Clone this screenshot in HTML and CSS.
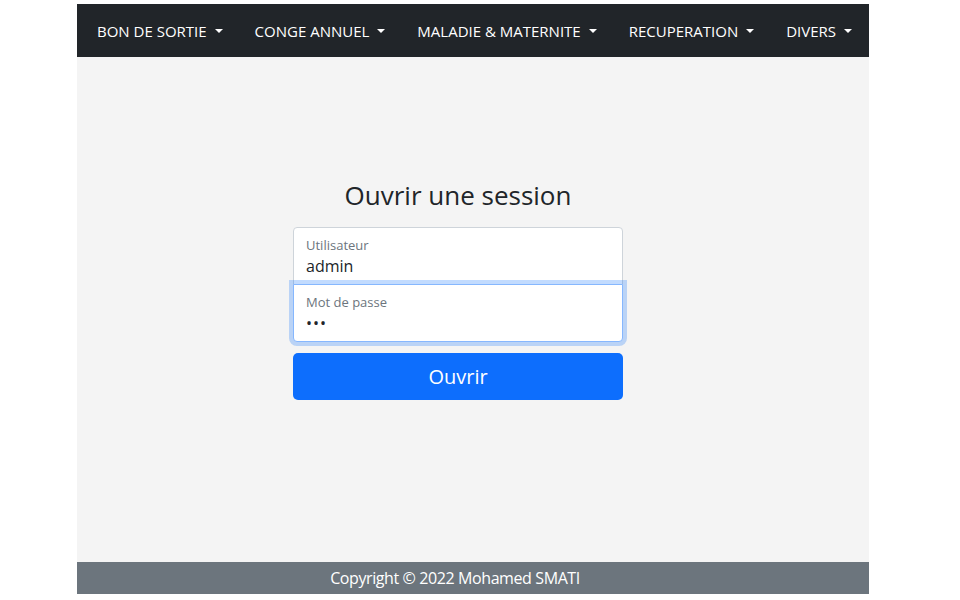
FILE: index.html
```html
<!DOCTYPE html>
<html lang="fr">
<head>
<meta charset="utf-8">
<title>Ouvrir une session</title>
<link rel="stylesheet" href="styles.css">
</head>
<body>
<div class="page">
  <nav class="navbar">
    <ul class="nav">
      <li class="nav-item"><a class="nav-link" href="#">BON DE SORTIE<span class="caret"></span></a></li>
      <li class="nav-item"><a class="nav-link" href="#">CONGE ANNUEL<span class="caret"></span></a></li>
      <li class="nav-item"><a class="nav-link" href="#">MALADIE &amp; MATERNITE<span class="caret"></span></a></li>
      <li class="nav-item"><a class="nav-link" href="#">RECUPERATION<span class="caret"></span></a></li>
      <li class="nav-item"><a class="nav-link" href="#">DIVERS<span class="caret"></span></a></li>
    </ul>
  </nav>
  <main class="main">
    <form class="login">
      <h1 class="title">Ouvrir une session</h1>
      <div class="floating first">
        <input class="control" type="text" value="admin" id="user">
        <label class="float-label" for="user">Utilisateur</label>
      </div>
      <div class="floating second focused">
        <input class="control" type="password" value="abc" id="pass">
        <label class="float-label" for="pass">Mot de passe</label>
      </div>
      <button class="btn" type="button">Ouvrir</button>
    </form>
  </main>
  <footer class="footer">
    <span class="copy">Copyright © 2022 Mohamed SMATI</span>
  </footer>
</div>
</body>
</html>
```

FILE: styles.css
```css
* { box-sizing: border-box; }
html, body { margin: 0; padding: 0; background: #ffffff; }
body {
  font-family: "Open Sans", "Noto Sans", sans-serif;
  color: #212529;
}
.page {
  width: 792px;
  margin: 4px 0 0 77px;
}
.navbar {
  background: #212529;
  height: 53px;
  display: flex;
  align-items: center;
  padding-left: 4px;
}
.nav {
  list-style: none;
  margin: 0;
  padding: 0;
  display: flex;
}
.nav-link {
  display: flex;
  align-items: center;
  padding: 0 16px;
  color: #ffffff;
  text-decoration: none;
  font-size: 15px;
  letter-spacing: 0;
}
.caret {
  display: inline-block;
  margin-left: 8px;
  width: 0;
  height: 0;
  border-top: 4px solid #ffffff;
  border-left: 4px solid transparent;
  border-right: 4px solid transparent;
}
.main {
  background: #f4f4f4;
  height: 505px;
  padding: 121px 0 0 216px;
}
.login {
  width: 330px;
}
.title {
  margin: 0 0 15px;
  text-align: center;
  font-size: 26px;
  font-weight: 400;
  line-height: 34px;
  color: #212529;
}
.floating {
  position: relative;
  height: 58px;
}
.control {
  display: block;
  width: 100%;
  height: 58px;
  padding: 25px 12px 6px;
  font-family: inherit;
  font-size: 16px;
  color: #212529;
  background: #ffffff;
  border: 1px solid #ced4da;
  outline: none;
}
.first .control {
  border-radius: 4px 4px 0 0;
}
.second {
  margin-top: -1px;
}
.second .control {
  border-radius: 0 0 4px 4px;
  border-color: #86b7fe;
  box-shadow: 0 0 0 4px rgba(13, 110, 253, 0.25);
  letter-spacing: 1px;
}
.float-label {
  position: absolute;
  left: 13px;
  top: 9px;
  font-size: 13px;
  color: #6c757d;
  pointer-events: none;
}
.btn {
  display: block;
  width: 100%;
  height: 47px;
  margin-top: 11px;
  border: none;
  border-radius: 5px;
  background: #0d6efd;
  color: #ffffff;
  font-family: inherit;
  font-size: 20px;
}
.footer {
  background: #6c757d;
  height: 32px;
  display: flex;
  align-items: center;
  justify-content: center;
  padding-right: 36px;
}
.copy {
  color: #ffffff;
  font-size: 16px;
  letter-spacing: -0.4px;
}
```
